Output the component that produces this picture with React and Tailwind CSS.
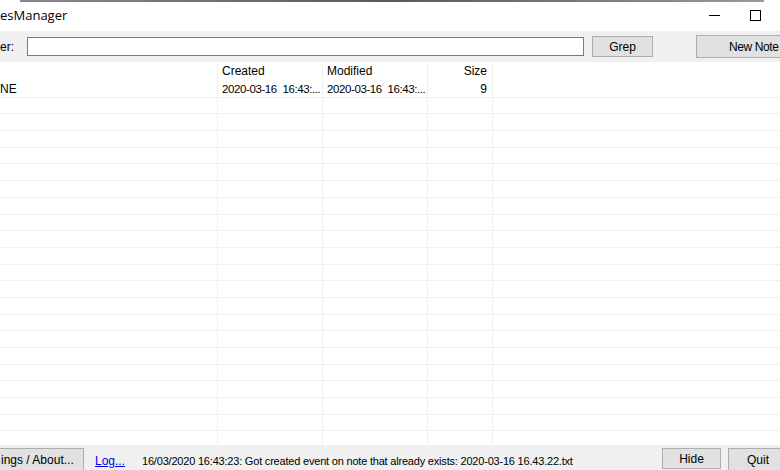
import { useState } from "react";

const COLS = ["w-[217px]", "w-[105px]", "w-[105px]", "w-[65px]", "flex-1"];

function Row({ cells, header }) {
  return (
    <div className={`flex shrink-0 ${header ? "h-[19px] pt-[1px]" : "h-[16.7px] border-b border-[#f0f0f0]"}`}>
      {COLS.map((w, i) => (
        <div
          key={i}
          className={`${w} shrink-0 ${i > 0 ? "border-l border-[#f0f0f0]" : ""} ${
            i === 3 ? "text-right pr-[5px]" : i === 0 ? "pl-0" : "pl-[4px]"
          } whitespace-pre overflow-hidden leading-[16px]`}
        >
          {cells ? cells[i] : ""}
        </div>
      ))}
    </div>
  );
}

function Button({ children, className }) {
  return (
    <button
      className={`shrink-0 bg-[#e1e1e1] border border-[#adadad] text-[12px] text-black leading-none ${className}`}
    >
      {children}
    </button>
  );
}

const stamp = <span className="text-[11.5px] tracking-[-0.4px]">2020-03-16  16:43:...</span>;

export default function App() {
  const [filter, setFilter] = useState("");
  const empty = Array.from({ length: 21 });

  return (
    <div className="w-[780px] h-[470px] overflow-hidden bg-white flex flex-col text-[12px] text-black font-['Liberation_Sans',Arial,sans-serif]">
      <div className="h-[2px] shrink-0 bg-gradient-to-r from-[#8a8a8a] via-[#5a5a5a] to-[#9a9a9a] ml-[20px] mr-[16px]" />
      {/* title bar */}
      <div className="h-[29px] shrink-0 flex items-center bg-white">
        <span className="text-[13px] font-['Open_Sans',sans-serif] -mt-[2px]">esManager</span>
        <div className="flex-1" />
        <div className="w-[11px] h-px bg-black mr-[30px] -mt-[3px]" />
        <div className="w-[11px] h-[11px] border border-black mr-[19px] -mt-[3px]" />
      </div>
      {/* toolbar */}
      <div className="h-[31px] shrink-0 bg-[#f0f0f0] flex items-center overflow-hidden">
        <span className="w-[27px] shrink-0">er:</span>
        <input
          value={filter}
          onChange={(e) => setFilter(e.target.value)}
          className="w-[557px] shrink-0 h-[19px] bg-white border border-[#7a7a7a] outline-none"
        />
        <Button className="ml-[8px] w-[61px] h-[21px]">Grep</Button>
        <Button className="ml-[43px] w-[92px] h-[23px] text-left pl-[32px] tracking-[-0.4px]">New Note</Button>
      </div>
      {/* list */}
      <div className="flex-1 overflow-hidden flex flex-col">
        <Row header cells={["", "Created", "Modified", "Size", ""]} />
        <Row cells={["NE", stamp, stamp, "9", ""]} />
        {empty.map((_, i) => (
          <Row key={i} />
        ))}
      </div>
      {/* status bar */}
      <div className="h-[25px] shrink-0 bg-[#f0f0f0] flex items-start pt-[3px] overflow-hidden">
        <Button className="-ml-[2px] w-[86px] h-[24px] text-left pl-[2px]">ings / About...</Button>
        <a href="#" className="shrink-0 ml-[11px] mt-[5px] leading-[16px] text-[#0000ee] underline">Log...</a>
        <span className="shrink-0 ml-[17px] mt-[5px] leading-[16px] whitespace-nowrap text-[11px] tracking-[-0.2px]">
          16/03/2020 16:43:23: Got created event on note that already exists: 2020-03-16 16.43.22.txt
        </span>
        <div className="flex-1" />
        <Button className="w-[59px] h-[21px]">Hide</Button>
        <Button className="ml-[7px] -mr-[8px] w-[60px] h-[24px]">Quit</Button>
      </div>
    </div>
  );
}
